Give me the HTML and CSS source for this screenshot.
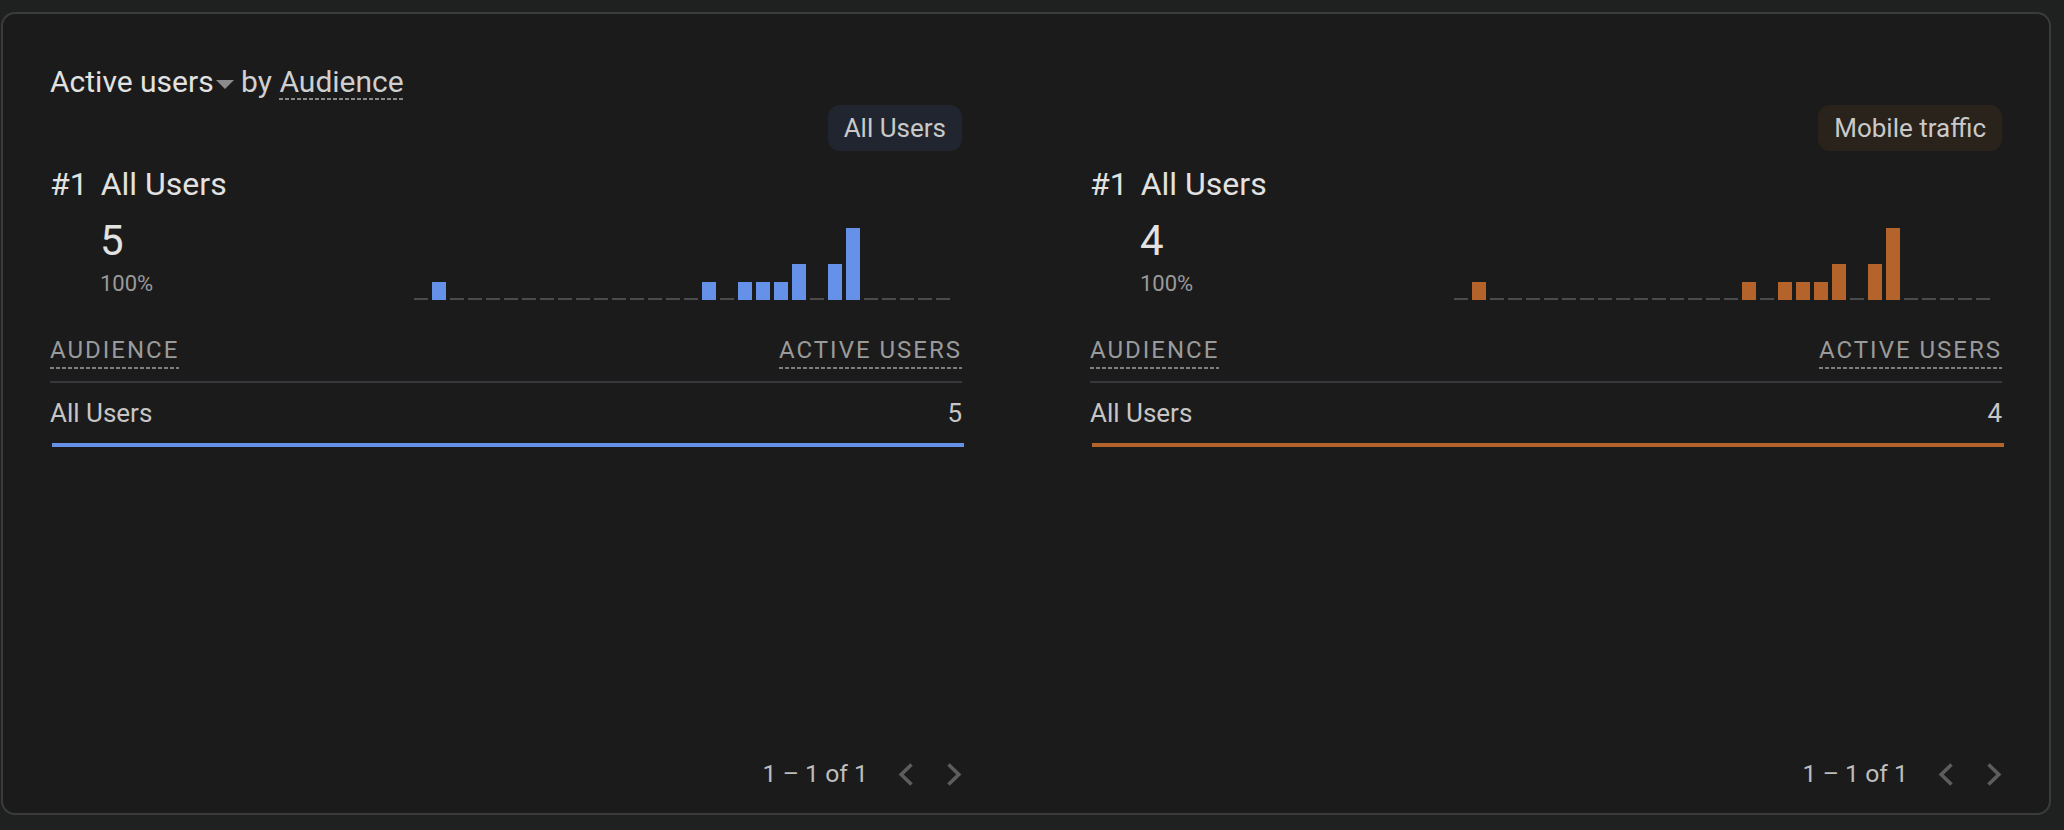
FILE: index.html
```html
<!DOCTYPE html>
<html lang="en">
<head>
<meta charset="utf-8">
<title>Active users by Audience</title>
<link rel="stylesheet" href="styles.css">
</head>
<body>
<div class="card">
  <div class="title">
    <span class="metric">Active users</span><span class="caret"></span> <span class="by">by</span> <span class="dim">Audience</span>
  </div>
  <div class="panels">
    <section class="panel">
      <div class="chip-row"><span class="chip chip-blue">All Users</span></div>
      <div class="headline"><span class="rank">#1</span><span>All Users</span></div>
      <div class="stat-row">
        <div class="stat">
          <div class="stat-value">5</div>
          <div class="stat-pct">100%</div>
        </div>
        <div class="chart blue">
          <i class="z"></i><i style="height:18px"></i><i class="z"></i><i class="z"></i><i class="z"></i><i class="z"></i><i class="z"></i><i class="z"></i><i class="z"></i><i class="z"></i><i class="z"></i><i class="z"></i><i class="z"></i><i class="z"></i><i class="z"></i><i class="z"></i><i style="height:18px"></i><i class="z"></i><i style="height:18px"></i><i style="height:18px"></i><i style="height:18px"></i><i style="height:36px"></i><i class="z"></i><i style="height:36px"></i><i style="height:72px"></i><i class="z"></i><i class="z"></i><i class="z"></i><i class="z"></i><i class="z"></i>
        </div>
      </div>
      <div class="thead">
        <span class="th">AUDIENCE</span>
        <span class="th">ACTIVE USERS</span>
      </div>
      <div class="trow">
        <span class="td-name">All Users</span>
        <span class="td-val">5</span>
      </div>
      <div class="share share-blue"></div>
      <div class="pager">
        <span class="pager-text">1 – 1 of 1</span>
        <svg class="chev" viewBox="0 0 16 23" width="16" height="23"><polyline points="13.5,1.5 3.2,11.5 13.5,21.5"/></svg>
        <svg class="chev" viewBox="0 0 16 23" width="16" height="23"><polyline points="2.5,1.5 12.8,11.5 2.5,21.5"/></svg>
      </div>
    </section>
    <section class="panel">
      <div class="chip-row"><span class="chip chip-orange">Mobile traffic</span></div>
      <div class="headline"><span class="rank">#1</span><span>All Users</span></div>
      <div class="stat-row">
        <div class="stat">
          <div class="stat-value">4</div>
          <div class="stat-pct">100%</div>
        </div>
        <div class="chart orange">
          <i class="z"></i><i style="height:18px"></i><i class="z"></i><i class="z"></i><i class="z"></i><i class="z"></i><i class="z"></i><i class="z"></i><i class="z"></i><i class="z"></i><i class="z"></i><i class="z"></i><i class="z"></i><i class="z"></i><i class="z"></i><i class="z"></i><i style="height:18px"></i><i class="z"></i><i style="height:18px"></i><i style="height:18px"></i><i style="height:18px"></i><i style="height:36px"></i><i class="z"></i><i style="height:36px"></i><i style="height:72px"></i><i class="z"></i><i class="z"></i><i class="z"></i><i class="z"></i><i class="z"></i>
        </div>
      </div>
      <div class="thead">
        <span class="th">AUDIENCE</span>
        <span class="th">ACTIVE USERS</span>
      </div>
      <div class="trow">
        <span class="td-name">All Users</span>
        <span class="td-val">4</span>
      </div>
      <div class="share share-orange"></div>
      <div class="pager">
        <span class="pager-text">1 – 1 of 1</span>
        <svg class="chev" viewBox="0 0 16 23" width="16" height="23"><polyline points="13.5,1.5 3.2,11.5 13.5,21.5"/></svg>
        <svg class="chev" viewBox="0 0 16 23" width="16" height="23"><polyline points="2.5,1.5 12.8,11.5 2.5,21.5"/></svg>
      </div>
    </section>
  </div>
</div>
</body>
</html>
```
FILE: styles.css
```css
html, body {
  margin: 0;
  padding: 0;
  background: #1f2020;
  font-family: Roboto, "Liberation Sans", sans-serif;
}

.card {
  box-sizing: border-box;
  margin: 12px 0 0 1px;
  width: 2050px;
  height: 803px;
  background: #1b1b1b;
  border: 2px solid #3a3b3d;
  border-radius: 14px;
  padding: 50px 47px 23px 47px;
  display: flex;
  flex-direction: column;
}

.title {
  font-size: 30px;
  line-height: 36px;
  color: #e2e2e2;
  white-space: nowrap;
}

.caret {
  display: inline-block;
  width: 0;
  height: 0;
  border-left: 9px solid transparent;
  border-right: 9px solid transparent;
  border-top: 9px solid #8c8c8c;
  margin-left: 2px;
  vertical-align: 3px;
}

.by { color: #d0d0d0; }

.dim {
  color: #cfcfcf;
  padding-bottom: 1px;
  background-image: repeating-linear-gradient(to right, #8a8a8a 0 4px, transparent 4px 6px);
  background-size: 100% 2px;
  background-position: 0 100%;
  background-repeat: no-repeat;
}

.panels {
  flex: 1;
  display: grid;
  grid-template-columns: 912px 912px;
  column-gap: 128px;
  margin-top: 5px;
}

.panel {
  display: flex;
  flex-direction: column;
}

.chip-row {
  display: flex;
  justify-content: flex-end;
}

.chip {
  height: 46px;
  line-height: 46px;
  padding: 0 16px 0 16px;
  border-radius: 12px;
  font-size: 26px;
  color: #c9c9c9;
}

.chip-blue { background: #20252f; }
.chip-orange { background: #2a231c; }

.headline {
  margin-top: 13px;
  font-size: 32px;
  line-height: 40px;
  color: #e2e2e2;
  display: flex;
  gap: 13px;
}

.stat-row {
  margin-top: 13px;
  display: flex;
  align-items: flex-start;
}

.stat {
  flex: 0 0 150px;
  box-sizing: border-box;
  padding-left: 50px;
}

.stat-value {
  font-size: 42px;
  line-height: 48px;
  color: #e2e2e2;
}

.stat-pct {
  margin-top: 6px;
  font-size: 22px;
  line-height: 26px;
  color: #9a9a9a;
}

.chart {
  margin-top: 11px;
  margin-left: 214px;
  width: 536px;
  height: 72px;
  display: flex;
  align-items: flex-end;
  justify-content: space-between;
}

.chart i {
  display: block;
  width: 14px;
}

.blue i { background: #6591e8; }
.orange i { background: #b4642a; }
.chart i.z { height: 2px; background: #4a4b4d; }

.thead {
  margin-top: 36px;
  display: flex;
  justify-content: space-between;
  padding-bottom: 12px;
  border-bottom: 2px solid #36373a;
}

.th {
  font-size: 24px;
  line-height: 28px;
  letter-spacing: 2px;
  color: #9a9a9a;
  padding-bottom: 5px;
  background-image: repeating-linear-gradient(to right, #7e7e7e 0 4px, transparent 4px 6px);
  background-size: 100% 2px;
  background-position: 0 100%;
  background-repeat: no-repeat;
}

.trow {
  margin-top: 15px;
  display: flex;
  justify-content: space-between;
  font-size: 26px;
  line-height: 30px;
  color: #c6c6c6;
}

.share {
  margin-top: 15px;
  height: 4px;
  margin-left: 2px;
  margin-right: -2px;
}

.share-blue { background: #6591e8; }
.share-orange { background: #b4642a; }

.pager {
  margin-top: auto;
  display: flex;
  justify-content: flex-end;
  align-items: center;
  height: 32px;
}

.pager-text {
  font-size: 24.8px;
  line-height: 32px;
  color: #bdbdbd;
  margin-right: 30px;
}

.chev {
  display: block;
}

.chev + .chev {
  margin-left: 32px;
}

.chev polyline {
  fill: none;
  stroke: #5c5d5f;
  stroke-width: 3.6;
  stroke-linecap: butt;
  stroke-linejoin: miter;
}
```
